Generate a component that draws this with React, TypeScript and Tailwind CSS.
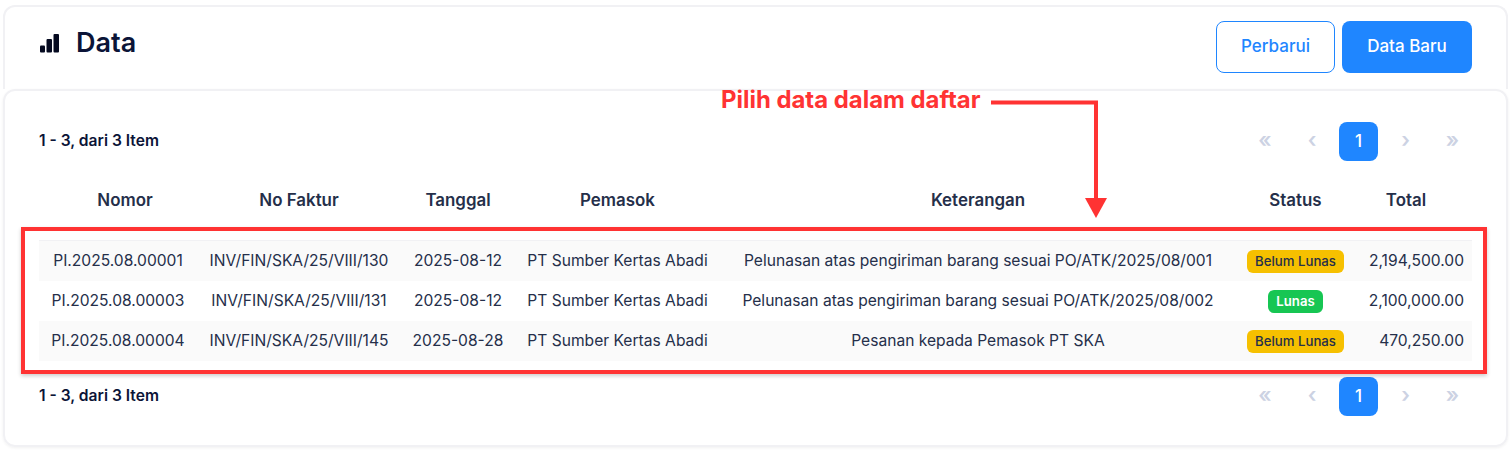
const rows = [
  {
    nomor: "PI.2025.08.00001",
    faktur: "INV/FIN/SKA/25/VIII/130",
    tanggal: "2025-08-12",
    pemasok: "PT Sumber Kertas Abadi",
    ket: "Pelunasan atas pengiriman barang sesuai PO/ATK/2025/08/001",
    status: "Belum Lunas",
    total: "2,194,500.00",
  },
  {
    nomor: "PI.2025.08.00003",
    faktur: "INV/FIN/SKA/25/VIII/131",
    tanggal: "2025-08-12",
    pemasok: "PT Sumber Kertas Abadi",
    ket: "Pelunasan atas pengiriman barang sesuai PO/ATK/2025/08/002",
    status: "Lunas",
    total: "2,100,000.00",
  },
  {
    nomor: "PI.2025.08.00004",
    faktur: "INV/FIN/SKA/25/VIII/145",
    tanggal: "2025-08-28",
    pemasok: "PT Sumber Kertas Abadi",
    ket: "Pesanan kepada Pemasok PT SKA",
    status: "Belum Lunas",
    total: "470,250.00",
  },
];

const gridCols = "grid grid-cols-[158px_204px_114px_206px_514px_121px_116px]";

const Pager = ({ label }: { label: string }) => {
  return (
    <div className="flex h-[39px] items-center justify-between">
      <span className="pb-[2px] text-[15.6px] font-semibold text-[#0b1437]">{label}</span>
      <div className="flex gap-2 text-[21px] font-semibold text-[#ccd2e3]">
        <span className="flex h-[39px] w-[39px] items-center justify-center pb-[3px] pl-[1px]">«</span>
        <span className="flex h-[39px] w-[39px] items-center justify-center pb-[3px] pl-[1px]">‹</span>
        <span className="flex h-[39px] w-[39px] items-center justify-center rounded-lg bg-[#1f86ff] text-[17px] font-medium text-white">
          1
        </span>
        <span className="flex h-[39px] w-[39px] items-center justify-center pb-[3px]">›</span>
        <span className="flex h-[39px] w-[39px] items-center justify-center pb-[3px]">»</span>
      </div>
    </div>
  );
};

const Status = ({ value }: { value: string }) => {
  const paid = value === "Lunas";
  return (
    <span
      className={
        paid
          ? "inline-block rounded-md bg-[#17c653] px-2 py-[2px] align-middle text-[13.2px] leading-[19px] font-semibold text-white"
          : "inline-block rounded-md bg-[#f6c000] px-[8.5px] py-[2px] align-middle text-[13.2px] leading-[19px] font-medium text-[#252f4a]"
      }
    >
      {value}
    </span>
  );
};

export default function App() {
  return (
    <div className="relative h-[451px] overflow-hidden bg-white px-[3px] pt-[5px] font-['Inter',sans-serif]">
      <div className="flex h-[84px] items-start justify-between rounded-t-xl border-2 border-b-0 border-[#f1f1f4] px-[34px] pt-[14px]">
        <div className="flex items-center gap-[16px] pt-[2px] pl-[1px]">
          <svg width="20" height="19" viewBox="0 0 20 19" fill="#050a20">
            <rect x="0" y="11.5" width="5" height="7" rx="1" />
            <rect x="6.5" y="5" width="5.5" height="13.5" rx="1" />
            <rect x="13.5" y="0" width="5.5" height="18.5" rx="1" />
          </svg>
          <h1 className="text-[27px] leading-[40px] font-semibold text-[#0b1437]">Data</h1>
        </div>
        <div className="flex gap-[7px]">
          <button className="h-[52px] w-[119px] rounded-lg border border-[#1f86ff] bg-white text-[17px] font-medium text-[#1f86ff]">
            Perbarui
          </button>
          <button className="h-[52px] w-[130px] rounded-lg bg-[#1f86ff] text-[17px] font-medium text-white">
            Data Baru
          </button>
        </div>
      </div>

      <div className="h-[358px] rounded-xl border-2 border-[#f1f1f4] px-[34px] pt-[31px] shadow-[0_1px_3px_rgba(0,0,0,0.06)]">
        <Pager label="1 - 3, dari 3 Item" />

        <div className={`${gridCols} mt-[20px] h-[40px] items-center text-center text-[16.9px] font-semibold text-[#252f4a]`}>
          <div className="pl-[14px]">Nomor</div>
          <div>No Faktur</div>
          <div>Tanggal</div>
          <div className="pr-[1px]">Pemasok</div>
          <div>Keterangan</div>
          <div>Status</div>
          <div className="pr-[16px]">Total</div>
        </div>

        <div className="mt-[19px] border-t border-[#f1f1f4]">
          {rows.map((r, i) => (
            <div
              key={r.nomor}
              className={`${gridCols} h-[40px] items-center text-center text-[15.6px] text-[#252f4a] ${
                i % 2 === 0 ? "bg-[#fafafa]" : "bg-white"
              }`}
            >
              <div>{r.nomor}</div>
              <div>{r.faktur}</div>
              <div>{r.tanggal}</div>
              <div className="pr-[1px]">{r.pemasok}</div>
              <div>{r.ket}</div>
              <div className="flex justify-center">
                <Status value={r.status} />
              </div>
              <div className="pr-[8px] text-right">{r.total}</div>
            </div>
          ))}
        </div>

        <div className="mt-[16px]">
          <Pager label="1 - 3, dari 3 Item" />
        </div>
      </div>

      {/* annotation */}
      <div className="absolute top-[227px] left-[21px] h-[147px] w-[1466px] border-4 border-[#ff3333] shadow-[0_2px_4px_rgba(0,0,0,0.2)]" />
      <div className="absolute top-[84px] left-[721px] text-[23.9px] leading-[32px] font-bold text-[#ff3333]">
        Pilih data dalam daftar
      </div>
      <svg className="absolute top-[98px] left-[988px]" width="124" height="124" viewBox="0 0 124 124">
        <path d="M3 4.5H108V104" fill="none" stroke="#ff3333" strokeWidth="4" />
        <path d="M97 100H119L108 120Z" fill="#ff3333" />
      </svg>
    </div>
  );
}
